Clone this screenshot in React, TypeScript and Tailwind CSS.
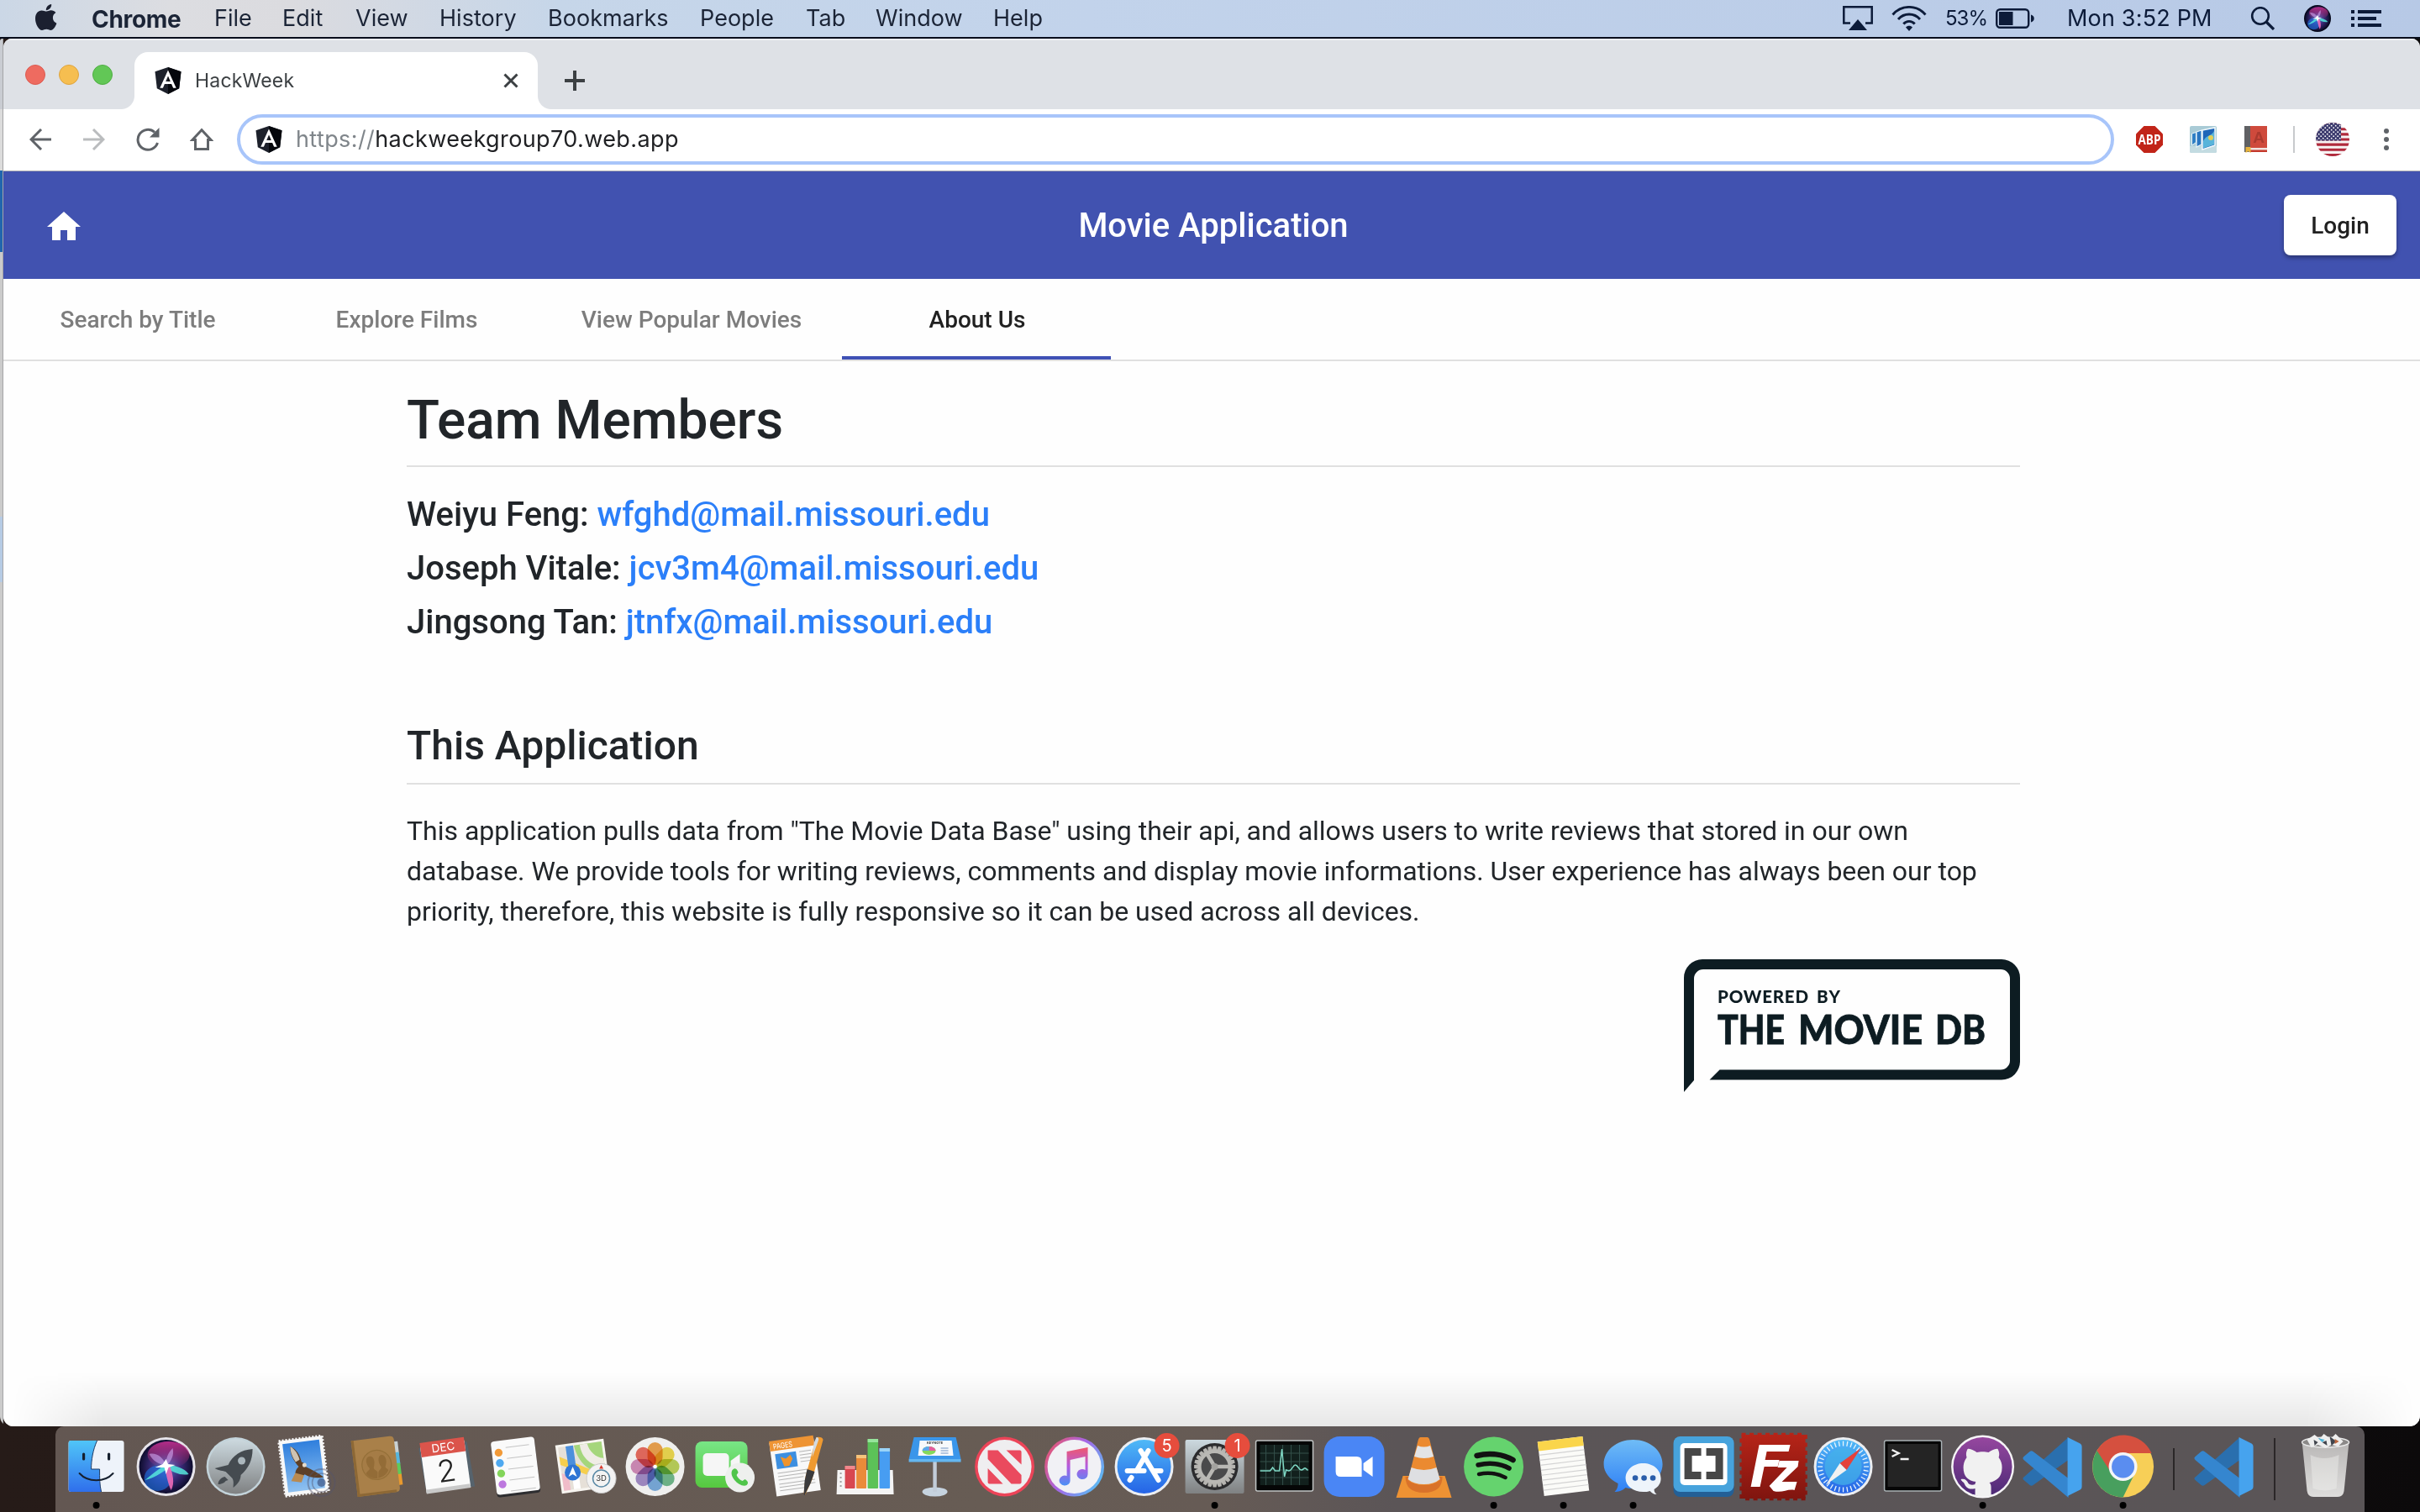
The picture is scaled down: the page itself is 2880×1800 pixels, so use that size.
import type { ReactNode } from "react";

const UI = "font-['Inter','Liberation_Sans',sans-serif]";

/* ---------- menu bar ---------- */

const menus = [
  { label: "File", box: "w-[81px]" },
  { label: "Edit", box: "w-[87px]" },
  { label: "View", box: "w-[100px]" },
  { label: "History", box: "w-[129px]" },
  { label: "Bookmarks", box: "w-[181px]" },
  { label: "People", box: "w-[126px]" },
  { label: "Tab", box: "w-[83px]" },
  { label: "Window", box: "w-[140px]" },
  { label: "Help", box: "w-[80px]" },
];

function MenuBar() {
  return (
    <header
      className={`${UI} flex h-[46px] shrink-0 items-center border-b-2 border-[#070d1c] bg-[linear-gradient(90deg,#cbd7e6_0%,#dcdde1_7%,#dbdbdf_12%,#c6d6e9_23%,#c2d3eb_45%,#b7c9e6_100%)] text-[27px] tracking-[0.03px] text-[#1b2436]`}
    >
      <svg className="ml-[40px] h-[34px] w-[30px]" viewBox="0 0 30 34" fill="#1b2030">
        <path d="M15.3 8.6c-1.6 0-3.400-1.200-5.800-1.200C5.400 7.400 2 10.900 2 17.200 2 23.600 6.200 31 10 31c1.900 0 2.900-1.200 5.300-1.200 2.300 0 3 1.200 5.100 1.200 3.100 0 5.800-4.700 7-8.300-2.700-1.100-4.500-3.500-4.500-6.400 0-2.700 1.300-4.800 3.500-6.200-1.400-1.900-3.500-2.800-5.700-2.800-2.300 0-3.800 1.300-5.400 1.300z" />
        <path d="M14.800 7.200c-.2-3.600 2.700-6.900 6.400-7.200.4 3.700-2.700 7-6.400 7.200z" />
      </svg>
      <span className="ml-[39px] w-[146px] pt-[1px] text-[28px] leading-none font-bold tracking-[-0.3px]">Chrome</span>
      {menus.map((m) => (
        <span key={m.label} className={`${m.box} pt-[1px]`}>
          {m.label}
        </span>
      ))}
      <div className="ml-auto flex items-center text-[#0c1b39]">
        <svg className="h-[30px] w-[36px]" viewBox="0 0 36 30">
          <path d="M9 20.500H1.300V1.300h33.400v19.200H27" fill="none" stroke="currentColor" strokeWidth="2.500" />
          <path d="M18 16l11 13H7z" fill="currentColor" />
        </svg>
        <svg className="ml-[22px] h-[30px] w-[42px]" viewBox="0 0 42 30" fill="none" stroke="currentColor" strokeWidth="2.900">
          <path d="M1.500 10.500C12-1.600 30-1.600 40.500 10.500M8 16c7-8 19-8 26 0M14.300 21.500c3.600-4.200 9.800-4.200 13.400 0" />
          <path d="M21 30l-4-4.500c2-2.200 6-2.200 8 0z" fill="currentColor" stroke="none" />
        </svg>
        <span className="ml-[22px] w-[60px] text-[24px] tracking-[-1px]">53%</span>
        <svg className="h-[24px] w-[46px]" viewBox="0 0 46 24">
          <rect x="1.200" y="1.200" width="38" height="21.600" rx="4" fill="none" stroke="currentColor" strokeWidth="2.400" />
          <rect x="4" y="4" width="16.500" height="16" fill="currentColor" />
          <path d="M42 7.500c5 1 5 8 0 9z" fill="currentColor" />
        </svg>
        <span className="ml-[39px] w-[218px] pt-[1px] tracking-[0.18px]">Mon 3:52 PM</span>
        <svg className="h-[28px] w-[30px]" viewBox="0 0 30 28" fill="none" stroke="currentColor" strokeWidth="2.600">
          <circle cx="12" cy="11" r="9.800" />
          <path d="M19 18l9 9" strokeWidth="3.200" />
        </svg>
        <svg className="ml-[34px] h-[32px] w-[32px]" viewBox="-35 -35 70 70">
          <SiriOrb rim="#06081c" />
        </svg>
        <svg className="mr-[46px] ml-[24px] h-[20px] w-[36px]" viewBox="0 0 36 20" fill="currentColor">
          <path d="M0 0h4v4H0zM8 0h28v4H8zM0 8h4v4H0zM8 8h22v4H8zM0 16h4v4H0zM8 16h28v4H8z" />
        </svg>
      </div>
    </header>
  );
}

/* ---------- browser chrome ---------- */

function AngularShield({ className }: { className: string }) {
  return (
    <svg className={className} viewBox="0 0 32 32">
      <path d="M16 0l15.500 5.300-2.300 19.900L16 32 2.800 25.200.500 5.300z" fill="#1d212b" />
      <path d="M16 0l15.500 5.300-2.300 19.900L16 32z" fill="#05070c" />
      <path fillRule="evenodd" d="M16 3.600L6.300 24.800h3.600l2-4.800h8.200l2 4.800h3.600zM16 10.500l2.800 6.500h-5.600z" fill="#fff" />
    </svg>
  );
}

function TabStrip() {
  return (
    <div className="flex h-[84px] shrink-0 items-end border-t-2 border-[#eceef1] bg-[#dee1e6]">
      <div className="ml-[26px] flex gap-[16px] self-start pt-[29px]">
        <span className="size-[24px] rounded-full border border-[#dd5a50] bg-[#ee6b60]" />
        <span className="size-[24px] rounded-full border border-[#dea43f] bg-[#f6be50]" />
        <span className="size-[24px] rounded-full border border-[#4fae43] bg-[#62c756]" />
      </div>
      <div className="ml-[10px] size-[16px] bg-[radial-gradient(circle_at_0_0,#dee1e6_15.500px,#fff_16.500px)]" />
      <div className={`${UI} flex h-[68px] w-[480px] items-center rounded-t-[16px] bg-white pr-[23px] pl-[24px]`}>
        <AngularShield className="size-[32px]" />
        <span className="ml-[16px] text-[23px] tracking-[0.2px] text-[#3c4043]">HackWeek</span>
        <svg className="ml-auto size-[18px]" viewBox="0 0 18 18" stroke="#3c4043" strokeWidth="3">
          <path d="M1.500 1.500l15 15M16.500 1.500l-15 15" />
        </svg>
      </div>
      <div className="size-[16px] bg-[radial-gradient(circle_at_100%_0,#dee1e6_15.500px,#fff_16.500px)]" />
      <svg className="mb-[22px] ml-[16px] size-[24px]" viewBox="0 0 24 24" stroke="#3c4043" strokeWidth="4">
        <path d="M12 0v24M0 12h24" />
      </svg>
    </div>
  );
}

function Toolbar() {
  return (
    <div className="flex h-[74px] shrink-0 items-center border-b border-[#b0b0b3] bg-white pb-[1px] pl-[31px]">
      <svg className="size-[26px]" viewBox="0 0 26 26" fill="none" stroke="#5f6368" strokeWidth="3">
        <path d="M26 13H2M14 1L2 13l12 12" />
      </svg>
      <svg className="ml-[38px] size-[26px]" viewBox="0 0 26 26" fill="none" stroke="#babcbe" strokeWidth="3">
        <path d="M0 13h24M12 1l12 12-12 12" />
      </svg>
      <svg className="ml-[37px] size-[28px]" viewBox="0 0 28 28" fill="none" stroke="#5f6368" strokeWidth="3">
        <path d="M25.500 18A12 12 0 1 1 22 5.300" />
        <path d="M27.500 0v11.500H16z" fill="#5f6368" stroke="none" />
      </svg>
      <svg className="ml-[36px] size-[28px]" viewBox="0 0 28 28" fill="none" stroke="#5f6368" strokeWidth="3">
        <path d="M14 2.800L3 14.500h3.500v11h15v-11H25z" />
      </svg>
      <div className={`${UI} ml-[28px] flex h-[60px] w-[2234px] items-center rounded-full border-4 border-[#a8c5fa] pl-[18px] text-[27px] text-[#202124]`}>
        <AngularShield className="size-[32px]" />
        <span className="ml-[16px] pt-[1px] tracking-[0.4px]">
          <span className="text-[#80868b]">https://</span>hackweekgroup70.web.app
        </span>
      </div>
      <svg className="ml-[26px] size-[32px]" viewBox="0 0 32 32">
        <path d="M9.500 0h13L32 9.500v13L22.500 32h-13L0 22.500v-13z" fill="#c12418" />
        <text x="16" y="21.500" fontSize="15.500" fontWeight="700" fill="#fff" textAnchor="middle" textLength="27" lengthAdjust="spacingAndGlyphs" fontFamily="Open Sans, sans-serif">
          ABP
        </text>
      </svg>
      <svg className="ml-[32px] size-[32px]" viewBox="0 0 32 32">
        <rect width="32" height="32" rx="2" fill="#a9cbd6" />
        <path d="M0 24h32v6a2 2 0 0 1-2 2H2a2 2 0 0 1-2-2z" fill="#c3dbe1" />
        <path d="M2.500 9l5-1.500v12L2.500 23z" fill="#2f7fc4" stroke="#eaf6fb" strokeWidth="1" />
        <path d="M8 7l6-2v17l-6 3z" fill="#2a76c0" stroke="#eaf6fb" strokeWidth="1.200" />
        <path d="M15 5l15-3v21l-15 5z" fill="#1f66b8" stroke="#f2fafd" strokeWidth="1.500" />
        <path d="M16 18c4-8 9-5 13-12v16l-13 4.500z" fill="#58b4da" />
        <circle cx="25" cy="14" r="3" fill="#e2cf58" />
      </svg>
      <svg className="ml-[33px] h-[32px] w-[28px]" viewBox="0 0 28 32">
        <path d="M0 0h27v26H0z" fill="#cf4a3c" />
        <path d="M0 0h7v31H0z" fill="#606164" />
        <path d="M7 26h20v3H7z" fill="#f0e5e2" />
        <path d="M7 28.500h20V31H7z" fill="#c5392c" />
        <path d="M1.500 25h6v7l-3-2-3 2z" fill="#e8b43c" />
        <text x="17" y="20" fontSize="19" fontWeight="700" fill="#ab3a2f" textAnchor="middle" fontFamily="Liberation Sans, sans-serif">
          A
        </text>
      </svg>
      <span className="ml-[30px] h-[32px] w-[2px] bg-[#c8cacd]" />
      <svg className="ml-[25px] size-[40px]" viewBox="0 0 40 40">
        <defs>
          <clipPath id="flag">
            <circle cx="20" cy="20" r="20" />
          </clipPath>
          <pattern id="stars" width="5" height="5" patternUnits="userSpaceOnUse">
            <circle cx="1.200" cy="1.200" r=".9" fill="#fff" />
            <circle cx="3.700" cy="3.700" r=".9" fill="#fff" />
          </pattern>
        </defs>
        <g clipPath="url(#flag)">
          <path d="M0 0h40v40H0z" fill="#f7f3f3" />
          <path d="M0 0h40v3H0zM0 6.200h40v3.100H0zM0 12.300h40v3.100H0zM0 18.500h40v3H0zM0 24.600h40v3.100H0zM0 30.800h40v3H0zM0 37h40v3H0z" fill="#b02a3c" />
          <path d="M0 0h30v21.500H0z" fill="#3c3b6e" />
          <path d="M0 0h30v21.500H0z" fill="url(#stars)" />
        </g>
      </svg>
      <svg className="ml-[41px] h-[28px] w-[6px]" viewBox="0 0 6 28" fill="#5f6368">
        <circle cx="3" cy="4" r="3" />
        <circle cx="3" cy="14" r="3" />
        <circle cx="3" cy="24" r="3" />
      </svg>
    </div>
  );
}

/* ---------- the web page ---------- */

const members = [
  { name: "Weiyu Feng", mail: "wfghd@mail.missouri.edu" },
  { name: "Joseph Vitale", mail: "jcv3m4@mail.missouri.edu" },
  { name: "Jingsong Tan", mail: "jtnfx@mail.missouri.edu" },
];

function MovieDbLogo() {
  return (
    <svg className="mt-[33px] ml-auto h-[158px] w-[400px]" viewBox="0 0 400 158" fill="#0d1c22" fontFamily="Lato, sans-serif" fontWeight="900">
      <path d="M0 158V22A22 22 0 0 1 22 0H378A22 22 0 0 1 400 22V121A22 22 0 0 1 378 143.500H30.500L42.500 131.500H377A11 11 0 0 0 388 120.500V23A11 11 0 0 0 377 12H23A11 11 0 0 0 12 23V144z" />
      <text x="40" y="52" fontSize="20.500" textLength="108">
        POWERED
      </text>
      <text x="158" y="52" fontSize="20.500" textLength="28">
        BY
      </text>
      <g fontSize="47.500" stroke="#0d1c22" strokeWidth=".8">
        <text x="40" y="101" textLength="80" lengthAdjust="spacingAndGlyphs">
          THE
        </text>
        <text x="136" y="101" textLength="148" lengthAdjust="spacingAndGlyphs">
          MOVIE
        </text>
        <text x="299" y="101" textLength="60" lengthAdjust="spacingAndGlyphs">
          DB
        </text>
      </g>
    </svg>
  );
}

function WebPage() {
  return (
    <div className="flex min-h-0 flex-1 flex-col bg-[#fefefe] font-['Roboto',sans-serif] text-[#212529]">
      <div className="flex h-[128px] shrink-0 items-center justify-between bg-[#4152b0] pr-[28px] pl-[48px] text-white">
        <svg className="mt-[4px] mr-[86px] size-[48px]" viewBox="0 0 24 24" fill="#fff">
          <path d="M10 20v-6h4v6h5v-8h3L12 3 2 12h3v8z" />
        </svg>
        <h1 className="mt-[2px] mr-[16px] text-[40px] font-medium">Movie Application</h1>
        <button className="h-[72px] w-[134px] rounded-[8px] bg-white pt-[1px] text-[28px] font-medium text-[#212121] shadow-[0_3px_5px_rgba(0,0,0,0.35)]">
          Login
        </button>
      </div>
      <nav className="flex h-[98px] shrink-0 border-b-2 border-[#e0e0e0] text-[28px] font-medium text-[#7d7d7d]">
        <span className="flex w-[320px] items-center justify-center pt-[2px]">Search by Title</span>
        <span className="flex w-[320px] items-center justify-center pt-[2px]">Explore Films</span>
        <span className="flex w-[358px] items-center justify-center pt-[2px]">View Popular Movies</span>
        <span className="flex w-[320px] items-center justify-center border-b-4 border-[#3f51b5] pt-[6px] pl-[2px] text-[#212121]">About Us</span>
      </nav>
      <main className="ml-[480px] flex w-[1920px] flex-col">
        <h1 className="mt-[33px] text-[64px] leading-[76px] font-medium">Team Members</h1>
        <hr className="mt-[15px] border-t-2 border-[#e0e0e0]" />
        <ul className="mt-[25px] text-[40px] leading-[64px] font-medium">
          {members.map((m) => (
            <li key={m.mail}>
              {m.name}: <span className="text-[#2b7ff9]">{m.mail}</span>
            </li>
          ))}
        </ul>
        <h2 className="mt-[86px] text-[48px] leading-[58px] font-medium">This Application</h2>
        <hr className="mt-[15px] border-t-2 border-[#e0e0e0]" />
        <p className="mt-[31px] text-[32px] leading-[48px] tracking-[-0.012px] whitespace-nowrap">
          This application pulls data from "The Movie Data Base" using their api, and allows users to write reviews that stored in our own
          <br />
          database. We provide tools for writing reviews, comments and display movie informations. User experience has always been our top
          <br />
          priority, therefore, this website is fully responsive so it can be used across all devices.
        </p>
        <MovieDbLogo />
      </main>
    </div>
  );
}

/* ---------- dock icons: drawn around x = 0, vertical centre 48 ---------- */

function SiriOrb({ rim }: { rim: string }) {
  return (
    <>
      <circle r="35" fill={rim} />
      <circle r="32" fill="url(#orb)" />
      <ellipse cx="3" cy="-14" rx="25" ry="16" fill="url(#orbTop)" />
      <ellipse cx="-10" cy="14" rx="16" ry="15" fill="#1f6fe0" opacity=".65" />
      <path d="M0-3C-10 4-18 10-25 16c10-2 19-8 27-14zM0-3c10 2 22 4 27 12-9 2-19-2-27-8z" fill="#56e6dc" opacity=".85" />
      <path d="M-2-2c2 10 4 22 8 30 5-8 2-20-2-30z" fill="#f06bb8" opacity=".9" />
      <path d="M0-2C-4-12-12-17-20-15c4 8 11 12 20 14zM0-2c0-8 2-14 8-20 2 9-2 15-7 21z" fill="#cfa6ee" opacity=".6" />
      <path d="M0-9l2.500 6L11-2 3 1 0 9l-2-8-11 0 9-4z" fill="#fff" />
    </>
  );
}

function Badge({ n }: { n: string }) {
  return (
    <g>
      <circle cx="27" cy="23" r="15" fill="#e64d3d" />
      <text x="27" y="30.500" fontSize="20" fill="#fff" textAnchor="middle" fontFamily="Inter, sans-serif">
        {n}
      </text>
    </g>
  );
}

function VsCode() {
  return (
    <>
      <path d="M-34 64l7 6q2 1.500 4 0L19 40V13L-33.500 60q-3 2-.5 4z" fill="#2a6fae" />
      <path d="M-34 36l7-6q2-1.500 4 0L19 62v23L-33.500 40.500q-3-2.500-.5-4.500z" fill="#3586cf" />
      <path d="M18 13l15 7.500q2 1 2 3.500v48q0 2.500-2 3.500L18 83z" fill="#46a3ee" />
    </>
  );
}

const petals = ["#f09a37", "#f0d83a", "#b5cf45", "#5fb37f", "#6aa3dc", "#9a80c4", "#cf7fb4", "#ea5a4b"];
const ticks = Array.from({ length: 36 }, (_, i) => i * 10);
const teeth = Array.from({ length: 24 }, (_, i) => i * 15);

const glyphs: { id: string; dot?: boolean; art: ReactNode }[] = [
  {
    id: "finder",
    dot: true,
    art: (
      <>
        <rect x="-33" y="17" width="66" height="61" rx="3" fill="#eef3fa" />
        <path d="M-30 17H1C-4 28-6 40-6 51H4C4 62 4 70 6 78H-30a3 3 0 0 1-3-3V20a3 3 0 0 1 3-3z" fill="url(#finderBlue)" />
        <path d="M-15 33v6M15 33v6" stroke="#16202e" strokeWidth="3.200" strokeLinecap="round" />
        <path d="M1 17C-4 28-6 40-6 51H4C4 62 4 70 6 78" fill="none" stroke="#1d3c66" strokeWidth="1" />
        <path d="M-20 56C-10 67 10 67 20 56" fill="none" stroke="#16202e" strokeWidth="2" strokeLinecap="round" />
      </>
    ),
  },
  {
    id: "siri",
    art: (
      <g transform="translate(0 48)">
        <SiriOrb rim="#e6e4ea" />
      </g>
    ),
  },
  {
    id: "launchpad",
    art: (
      <>
        <circle cy="48" r="35" fill="#c3d3da" />
        <circle cy="48" r="32.500" fill="url(#steel)" />
        <path d="M20 27C6 28-4 35-9 46L-25 50C-20 53-15 53-12 54L-4 62C-2 66-3 69-3 73C4 68 6 62 6 58C15 50 20 41 20 27z" fill="#454b50" />
        <path d="M-13 60c-5 1-8 5-8 9 4 0 8-2 9-4l3-1z" fill="#454b50" />
        <circle cx="7" cy="41" r="4.500" fill="#aab6bc" />
      </>
    ),
  },
  {
    id: "mail",
    art: (
      <>
        <g transform="rotate(-7 0 48)">
          <rect x="-28" y="14" width="52" height="66" fill="#f8f8f8" />
          <rect x="-28" y="14" width="52" height="66" fill="none" stroke="#f8f8f8" strokeWidth="3" strokeDasharray="2 2" />
          <rect x="-24" y="18" width="44" height="58" fill="url(#sky)" />
          <path d="M-15 22c7 4 10 11 11 20 3 1 4 4 4 6 6 4 14 9 20 15-9 1-17-2-22-6l-5 3-6-5c0-3 2-6 5-8-5-7-9-16-7-25z" fill="#5d4027" />
          <path d="M-15 22c5 4 8 10 9 17l-5 2c-3-6-5-12-4-19z" fill="#cfc3b2" />
          <path d="M-13 54l10 4-4 8-12-3z" fill="#b98a50" />
          <circle cx="-1" cy="46" r="2.500" fill="#e6dccb" />
        </g>
        <circle cx="19" cy="67" r="16" fill="none" stroke="#55556b" strokeWidth="2" opacity=".45" />
        <circle cx="19" cy="67" r="11" fill="none" stroke="#55556b" strokeWidth="1.500" opacity=".45" />
        <circle cx="19" cy="67" r="5" fill="#3f5684" opacity=".7" />
      </>
    ),
  },
  {
    id: "contacts",
    art: (
      <g transform="rotate(-7 0 48)">
        <path d="M22 21h7v15h-7z" fill="#c9d1d3" />
        <path d="M22 34h7v14h-7z" fill="#57b6dd" />
        <path d="M22 47h7v14h-7z" fill="#5fca5a" />
        <path d="M22 60h7v13h-7z" fill="#e99a2e" />
        <path d="M-26 14h46q5 0 5 5v57q0 5-5 5h-46z" fill="#a98049" />
        <path d="M-26 14h3v67h-3z" fill="#8d6835" />
        <path d="M-26 78h47v3h-47z" fill="#8d6835" />
        <circle cx="1" cy="46" r="17.500" fill="#a57c46" stroke="#957039" strokeWidth="1.300" />
        <path d="M-13 55c2-4 5-3 5-6-5-7-3-14 2-14s6 7 3 14c0 3 3 3 4 6l-1 7c-6 0-10-2-13-7z" fill="#936c37" />
        <path d="M2 55c1-3 4-3 4-6-4-7-2-14 2-14s7 7 3 14c0 3 3 3 3 5-3 5-7 7-13 8z" fill="#936c37" />
      </g>
    ),
  },
  {
    id: "calendar",
    art: (
      <g transform="rotate(-8 0 48)">
        <path d="M-29 22h58l2 54h-58z" fill="#56636d" />
        <path d="M-27 20h53v56h-53z" fill="#fafafa" />
        <path d="M-27 72h53v5h-53z" fill="#c9c9c9" />
        <path d="M-27 16h53v17h-53z" fill="#db544b" />
        <text x="0" y="29.500" fontSize="13.500" fill="#fff" textAnchor="middle" fontFamily="Inter, sans-serif">
          DEC
        </text>
        <text x="0" y="66" fontSize="36" fontWeight="300" fill="#222" textAnchor="middle" fontFamily="Inter, sans-serif">
          2
        </text>
      </g>
    ),
  },
  {
    id: "reminders",
    art: (
      <g transform="rotate(-7 0 48)">
        <rect x="-26" y="18" width="52" height="64" rx="4" fill="#2d2d30" />
        <rect x="-26" y="15" width="52" height="64" rx="4" fill="#fafafa" />
        <path d="M-9 24h28M-9 37h30M-9 50h30M-9 63h30M-9 76h30" stroke="#c4c4c4" strokeWidth="1" />
        <circle cx="-18" cy="29" r="4.700" fill="#f29a38" />
        <circle cx="-18" cy="41.500" r="4.700" fill="#4fa9f0" />
        <circle cx="-18" cy="54" r="4.700" fill="#83d55a" />
        <circle cx="-18" cy="67" r="4.700" fill="#bd78de" />
      </g>
    ),
  },
  {
    id: "maps",
    art: (
      <>
        <g transform="rotate(-8 0 48)">
          <rect x="-32" y="18" width="58" height="58" fill="#f7f5f0" />
          <path d="M-29 21h52v52h-52z" fill="#e6e0d8" />
          <path d="M-10 21h33v38C8 58-8 45-10 21z" fill="#a5d67c" />
          <path d="M-3 21h9c1 10 8 18 17 20v10C8 49-3 38-3 21z" fill="#efece5" />
          <path d="M-29 32L23 62v8L-29 42z" fill="#f6cf4e" />
          <path d="M-29 52l8 4v17h-8z" fill="#f0bcc9" />
          <path d="M-20 21h9v38h-9z" fill="#4c8fdc" />
          <path d="M-17 58h8v15h-8z" fill="#fff" />
        </g>
        <circle cx="-15" cy="55" r="9.500" fill="#2e74d4" />
        <path d="M-15 48l5 12-5-3-5 3z" fill="#fff" />
        <circle cx="19" cy="62" r="17.500" fill="#f3f3f3" stroke="#c9c9c9" strokeWidth="1" />
        <circle cx="19" cy="62" r="10" fill="none" stroke="#5b8aa6" strokeWidth="1.500" />
        <path d="M19 46l2.500 4.500h-5z" fill="#d8392b" />
        <text x="19" y="65.500" fontSize="9.500" fill="#333" textAnchor="middle" fontFamily="Inter, sans-serif">
          3D
        </text>
      </>
    ),
  },
  {
    id: "photos",
    art: (
      <>
        <circle cy="48" r="35" fill="#efefee" />
        {petals.map((c, i) => (
          <rect key={c} x="-9" y="19" width="18" height="27" rx="9" fill={c} opacity=".88" transform={`rotate(${i * 45} 0 48)`} className="mix-blend-multiply" />
        ))}
        <circle cy="48" r="2" fill="#fff" />
      </>
    ),
  },
  {
    id: "facetime",
    art: (
      <>
        <rect x="-35" y="18" width="62" height="55" rx="8" fill="url(#green)" />
        <rect x="-26" y="32" width="31" height="27" rx="5" fill="#f6f6f6" />
        <path d="M7 41l11-8v26L7 51z" fill="#f6f6f6" />
        <circle cx="18" cy="61" r="17.500" fill="#eef0ee" />
        <path d="M9 52c4-4 6 0 7 3l-2 3c1 3 4 6 7 7l3-2c3 2 5 4 2 7C19 74 4 60 9 52z" fill="#4fc54a" />
      </>
    ),
  },
  {
    id: "pages",
    art: (
      <>
        <g transform="rotate(-8 0 48)">
          <path d="M-27 16h53v64h-53z" fill="#f8f8f8" />
          <path d="M-27 14h53v12h-53z" fill="#ee9434" />
          <text x="-23" y="24" fontSize="9" fill="#fff" textLength="23" lengthAdjust="spacingAndGlyphs" fontFamily="Inter, sans-serif">
            PAGES
          </text>
          <path d="M-22 30h25v18h-25z" fill="#3d8fe0" />
          <path d="M-16 34l6 3 6-4 2 5-5 8h-6z" fill="#f0942c" />
          <path d="M7 31h14M7 35h14M7 39h14M7 43h14M-22 53h43M-22 57h43M-22 61h30M-22 66h43M-22 70h43M-22 74h30" stroke="#b5b5b5" strokeWidth="1" />
        </g>
        <path d="M25 13q7-1 8 3L20 63l-8 18-2-1 2-20z" fill="#ef9a31" />
        <path d="M14 51l9 3-5 14-7 14-1-1 1-16z" fill="#3b3b3d" />
        <path d="M22 20l3-7q4 0 2 5l-7 19z" fill="#d4dbe2" />
      </>
    ),
  },
  {
    id: "numbers",
    art: (
      <>
        <path d="M-33 52h66l1 29h-68z" fill="#f4f4f4" />
        <path d="M-30 56h2M-30 61h2M-30 66h2M-30 71h2" stroke="#888" strokeWidth="1.500" />
        <rect x="-24" y="47" width="12" height="27" rx="1" fill="#d84750" />
        <rect x="-10.500" y="34" width="12" height="40" rx="1" fill="#ea8b3a" />
        <rect x="3" y="15" width="12.500" height="59" rx="1" fill="#5cc258" />
        <rect x="17" y="26" width="12.500" height="48" rx="1" fill="#479df2" />
        <path d="M-24 47h12v4h-12z" fill="#f0888c" />
        <path d="M-10.500 34h12v4h-12z" fill="#f5c47c" />
        <path d="M3 15h12.500v4H3z" fill="#97e59c" />
        <path d="M17 26h12.500v4H17z" fill="#9ad4f8" />
      </>
    ),
  },
  {
    id: "keynote",
    art: (
      <>
        <ellipse cx="0" cy="78" rx="15" ry="5.500" fill="#c6d3df" />
        <path d="M-2.200 40h4.400v38h-4.400z" fill="#c2ccd8" />
        <path d="M-25 13h50l6 26h-62z" fill="#3a96ea" />
        <path d="M-31 39h62v3.500h-62z" fill="#64b6f0" />
        <path d="M-18 17h38l2 18h-42z" fill="#f7f9fb" />
        <text x="0" y="21.500" fontSize="4" fontWeight="700" fill="#444" textAnchor="middle" fontFamily="Inter, sans-serif">
          KEYNOTE
        </text>
        <ellipse cx="-7" cy="29" rx="8" ry="5" fill="#86d85b" />
        <path d="M-7 29v-5a8 5 0 0 1 8 5z" fill="#e35c9c" />
        <path d="M-7 29v-5a8 5 0 0 0-8 5z" fill="#5da7ee" />
        <path d="M7 26h9M7 29h9M7 32h9" stroke="#9fb7d8" strokeWidth="1.500" />
      </>
    ),
  },
  {
    id: "news",
    art: (
      <>
        <circle cy="48" r="35.500" fill="#ec4458" />
        <circle cy="48" r="32" fill="#efeef0" />
        <path d="M-20 28.500h12L20 58v8.500a2 2 0 0 1-2 2H8L-20 39z" fill="#ea4a5e" />
        <path d="M2 28.500h16a2 2 0 0 1 2 2v15zM-20 50l18 18.500h-16a2 2 0 0 1-2-2z" fill="#ea4a5e" />
      </>
    ),
  },
  {
    id: "music",
    art: (
      <>
        <circle cy="48" r="35.500" fill="url(#ring)" />
        <circle cy="48" r="32" fill="#f1f1f5" />
        <path d="M-9 30L16 25v32a6.500 6 0 1 1-3-5V36l-18 4v24a6.500 6 0 1 1-4-5z" fill="url(#note)" />
      </>
    ),
  },
  {
    id: "appstore",
    art: (
      <>
        <circle cy="48" r="35" fill="#eceef1" />
        <circle cy="48" r="32" fill="url(#azure)" />
        <path d="M-4 29L11 54M11 54l6 10M5 29L-9 53M-15 61l-2 3M-20 53H0M12 53h8" stroke="#fff" strokeWidth="6" strokeLinecap="round" fill="none" />
        <Badge n="5" />
      </>
    ),
  },
  {
    id: "prefs",
    dot: true,
    art: (
      <>
        <rect x="-35" y="16" width="70" height="64" rx="2" fill="url(#steel)" />
        <circle cy="48" r="28" fill="#2b2b2d" />
        {teeth.map((a) => (
          <path key={a} d="M-2 23.500h4l1 6h-6z" fill="#b5b4b0" transform={`rotate(${a} 0 48)`} />
        ))}
        <circle cy="48" r="18" fill="#4a4a4b" stroke="#b9b8b4" strokeWidth="4" />
        <path d="M0 48h17M0 48l-9-15M0 48l-9 15" stroke="#b9b8b4" strokeWidth="4.500" />
        <circle cy="48" r="4" fill="#a3a29f" />
        <Badge n="1" />
      </>
    ),
  },
  {
    id: "activity",
    art: (
      <>
        <rect x="-34" y="17" width="68" height="60" rx="2" fill="#050606" stroke="#c0c4c4" strokeWidth="1.500" />
        <rect x="-29" y="22" width="58" height="48" fill="#12201d" />
        <path d="M-22 22v48M-12 22v48M-2 22v48M8 22v48M18 22v48M-29 32h58M-29 42h58M-29 52h58M-29 61h58" stroke="#34504a" strokeWidth="1" />
        <path d="M-29 53h12l3-4 3 4h5l3-26 3 33 2-8 3 1c4 0 5-7 8-7s4 6 7 6 3-3 5-2 2 2 3 2" fill="none" stroke="#7fd8c4" strokeWidth="1.500" />
      </>
    ),
  },
  {
    id: "zoom",
    art: (
      <>
        <rect x="-36" y="12" width="72" height="72" rx="19" fill="#4a86f5" />
        <path d="M-22 36H3q6 0 6 6v18H-16q-6 0-6-6z" fill="#fff" />
        <path d="M11 44l11-8v24l-11-8z" fill="#fff" />
      </>
    ),
  },
  {
    id: "vlc",
    art: (
      <>
        <path d="M-25 59h50l8 26h-66z" fill="#ee9233" />
        <path d="M-22 60h44q0 19-22 19t-22-19z" fill="#d9722a" />
        <path d="M-4 13h8q2 0 3 4l12 47q-7 6-19 6t-19-6L-7 17q1-4 3-4z" fill="#eb8a30" />
        <path d="M-7.500 23q7.500 3 15 0l4 13q-11 4-23 0z" fill="#e3e4e6" />
        <path d="M-15 49q15 6 30 0l4 14q-7 6-19 6t-19-6z" fill="#dedfe2" />
      </>
    ),
  },
  {
    id: "spotify",
    dot: true,
    art: (
      <>
        <circle cy="48" r="35.500" fill="#65d36e" />
        <path d="M-20 35c15-4 31-2 43 5" stroke="#121212" strokeWidth="6.500" fill="none" strokeLinecap="round" />
        <path d="M-18.500 46c13-3 26-2 37 4" stroke="#121212" strokeWidth="5.500" fill="none" strokeLinecap="round" />
        <path d="M-17.500 57c12-3 22-1 31.500 4" stroke="#121212" strokeWidth="4.500" fill="none" strokeLinecap="round" />
      </>
    ),
  },
  {
    id: "notes",
    dot: true,
    art: (
      <g transform="rotate(-7 0 48)">
        <path d="M-27 15h54v65h-54z" fill="#fbfbf8" />
        <path d="M-27 15h54v11h-54z" fill="#fad54b" />
        <path d="M-27 31h54M-27 37h54M-27 43h54M-27 49h54M-27 55h54M-27 61h54M-27 67h54M-27 73h54" stroke="#d3d3d3" strokeWidth="1.200" />
      </g>
    ),
  },
  {
    id: "messages",
    dot: true,
    art: (
      <>
        <path d="M0 16c20 0 35 13 35 29S20 74 0 74c-4 0-6 0-9-1-4 4-9 5-13 5 3-3 4-6 4-10-10-5-17-13-17-23 0-16 15-29 35-29z" fill="url(#bubble)" />
        <path d="M12 44c12 0 21 8 21 18 0 6-3 10-8 13 0 3 1 4 3 6-4 0-6-2-8-4-2 1-5 1-8 1-12 0-21-7-21-16 0-10 9-18 21-18z" fill="#eef4fb" />
        <circle cx="2.500" cy="61.500" r="3.300" fill="#2a5daa" />
        <circle cx="13" cy="61.500" r="3.300" fill="#2a5daa" />
        <circle cx="23.500" cy="61.500" r="3.300" fill="#2a5daa" />
      </>
    ),
  },
  {
    id: "brackets",
    art: (
      <>
        <rect x="-36" y="14" width="72" height="70" rx="8" fill="#235f96" />
        <rect x="-36" y="12" width="72" height="66" rx="8" fill="#47a3dc" />
        <rect x="-28" y="20" width="56" height="50" rx="5" fill="#fff" />
        <path d="M-23 26h20v9h-11v19h11v9h-20zM23 26H3v9h11v19H3v9h20z" fill="#474747" />
      </>
    ),
  },
  {
    id: "filezilla",
    art: (
      <>
        <rect x="-38" y="10" width="76" height="76" fill="url(#stamp)" />
        <rect x="-38" y="10" width="76" height="76" fill="none" stroke="url(#stamp)" strokeWidth="4.500" strokeDasharray="5 4.500" />
        <path d="M-17 22H20l-2 8H-8l-2 10H7l-2 8h-16l-5 24h-11z" fill="#fff" />
        <path d="M7 41h23l-1 7L10 66h18l-3 10c-8-2-15 4-25 1l-5-6 21-22H5z" fill="#fff" />
      </>
    ),
  },
  {
    id: "safari",
    art: (
      <>
        <circle cy="48" r="35" fill="#eceef1" />
        <circle cy="48" r="32" fill="url(#azure)" />
        <circle cy="48" r="22" fill="#45b2e8" opacity=".7" />
        {ticks.map((a) => (
          <path key={a} d="M0 17.500v6" stroke="#e9f4fc" strokeWidth="1.300" transform={`rotate(${a} 0 48)`} />
        ))}
        <path d="M21 26L4 52l-8-8z" fill="#e5423b" />
        <path d="M-21 70l17-26 8 8z" fill="#f1f1f1" />
      </>
    ),
  },
  {
    id: "terminal",
    art: (
      <>
        <rect x="-34" y="17" width="68" height="60" rx="2" fill="#060606" stroke="#a9b1b4" strokeWidth="1.500" />
        <rect x="-30" y="21" width="60" height="51" fill="#242424" />
        <path d="M-25 28l8 4-8 4M-15 39h10" fill="none" stroke="#f4f4f4" strokeWidth="2.400" />
      </>
    ),
  },
  {
    id: "github",
    dot: true,
    art: (
      <>
        <circle cy="48" r="37.500" fill="#f5f4f6" />
        <circle cy="48" r="35" fill="url(#violet)" />
        <path d="M-18 27c3-1 8 2 11 4 4-1 10-1 14 0 3-2 8-5 11-4 2 4 2 7 1 10 3 4 4 8 4 12 0 12-7 16-15 18 2 2 2 4 2 7v8c-6 2-13 2-19 0v-8c-9 2-11-2-13-6-1-2-3-2-4-5 5-1 7 1 9 5 2 2 5 2 8 1 0-1 0-2 1-3-9-1-15-6-15-17 0-4 1-8 4-12-1-3-1-6 1-10z" fill="#f1f1f1" />
      </>
    ),
  },
  { id: "vscode", art: <VsCode /> },
  {
    id: "chrome",
    dot: true,
    art: (
      <>
        <circle cy="48" r="36.500" fill="#f7cf57" />
        <path d="M0 48L-31 29A36.500 36.500 0 0 0 0 84.500L14 56z" fill="#489f5e" />
        <path d="M-31 29A36.500 36.500 0 0 1 34 32H0l-15 22z" fill="#d5503f" />
        <circle cy="48" r="17" fill="#f4f5f7" />
        <circle cy="48" r="13.500" fill="#5a8df0" />
      </>
    ),
  },
];

function DockIcon({ art, dot }: { art: ReactNode; dot?: boolean }) {
  return (
    <svg className="h-[102px] w-[83.170px] shrink-0 overflow-visible" viewBox="-41.585 0 83.170 102">
      {art}
      {dot && <circle cy="94" r="4" fill="#000" />}
    </svg>
  );
}

function Gradients() {
  const v = { x1: "0", y1: "0", x2: "0", y2: "1" };
  return (
    <svg className="absolute size-0">
      <defs>
        <radialGradient id="orb" cx=".5" cy=".5" r=".5">
          <stop offset="0" stopColor="#5a7fd0" />
          <stop offset=".55" stopColor="#3a2a78" />
          <stop offset="1" stopColor="#0d0c2c" />
        </radialGradient>
        <linearGradient id="orbTop" {...v}>
          <stop offset="0" stopColor="#b32c8a" />
          <stop offset="1" stopColor="#c8387f" stopOpacity="0" />
        </linearGradient>
        <linearGradient id="finderBlue" {...v}>
          <stop offset="0" stopColor="#50c5f8" />
          <stop offset="1" stopColor="#2f6fec" />
        </linearGradient>
        <linearGradient id="steel" {...v}>
          <stop offset="0" stopColor="#ccd9df" />
          <stop offset="1" stopColor="#7f8182" />
        </linearGradient>
        <linearGradient id="sky" {...v}>
          <stop offset="0" stopColor="#2f7fdd" />
          <stop offset="1" stopColor="#8fc1f0" />
        </linearGradient>
        <linearGradient id="green" {...v}>
          <stop offset="0" stopColor="#78e686" />
          <stop offset="1" stopColor="#56c83f" />
        </linearGradient>
        <linearGradient id="azure" {...v}>
          <stop offset="0" stopColor="#4fb9f7" />
          <stop offset="1" stopColor="#2563e6" />
        </linearGradient>
        <linearGradient id="bubble" {...v}>
          <stop offset="0" stopColor="#6fbcf6" />
          <stop offset="1" stopColor="#2f80f5" />
        </linearGradient>
        <linearGradient id="violet" {...v}>
          <stop offset="0" stopColor="#96479f" />
          <stop offset="1" stopColor="#4c2a76" />
        </linearGradient>
        <linearGradient id="stamp" {...v}>
          <stop offset="0" stopColor="#b52418" />
          <stop offset="1" stopColor="#80150f" />
        </linearGradient>
        <linearGradient id="ring" x1="0" y1=".2" x2="1" y2=".8">
          <stop offset="0" stopColor="#e9556d" />
          <stop offset=".45" stopColor="#a665e6" />
          <stop offset="1" stopColor="#52c4f5" />
        </linearGradient>
        <linearGradient id="note" {...v}>
          <stop offset="0" stopColor="#f0586c" />
          <stop offset=".5" stopColor="#b35be0" />
          <stop offset="1" stopColor="#4a90f5" />
        </linearGradient>
        <linearGradient id="glass" {...v}>
          <stop offset="0" stopColor="#b9b7b6" />
          <stop offset="1" stopColor="#dedddc" />
        </linearGradient>
      </defs>
    </svg>
  );
}

function Dock() {
  return (
    <div className="mr-[66px] ml-[66px] flex h-[102px] shrink-0 items-center rounded-t-[10px] bg-[linear-gradient(90deg,#635752_0%,#675c54_40%,#665b55_50%,#5b5557_58%,#5a5557_100%)] pl-[7px]">
      {glyphs.map((g) => (
        <DockIcon key={g.id} art={g.art} dot={g.dot} />
      ))}
      <span className="mr-[17px] ml-[18px] h-[50px] w-[2px] bg-[#2b2728]" />
      <DockIcon art={<VsCode />} />
      <span className="mx-[18px] h-[74px] w-[2px] bg-[#2b2728]" />
      <DockIcon
        art={
          <>
            <path d="M-28 18h56l-6 59q-1 7-8 7h-28q-7 0-8-7z" fill="url(#glass)" />
            <ellipse cx="0" cy="19" rx="28" ry="6" fill="#8b8988" stroke="#e8e8e8" strokeWidth="1.500" />
            <path d="M-22 16l9-6 6 5 5-6 8 6 6-6 9 9-6 6-8-2-7 4-9-4-8 3z" fill="#eeeeee" />
            <path d="M-14 16l5 3-4 4zM5 12l8 6-6 5zM-4 19l5-2 1 6z" fill="#41454d" />
            <path d="M-9 14l8 2-3 3z" fill="#4db4d8" />
            <path d="M11 15l5 3-5 3z" fill="#b8643d" />
            <path d="M-18 34q16 8 34 0l-3 40q-14 5-28 0z" fill="#efefee" opacity=".45" />
          </>
        }
      />
    </div>
  );
}

/* ---------- desktop ---------- */

export default function App() {
  return (
    <div className="flex h-[1800px] w-[2880px] flex-col overflow-hidden bg-[linear-gradient(90deg,#261b18_0%,#1e1716_50%,#0c0a0b_100%)]">
      <Gradients />
      <MenuBar />
      <div className="flex h-[1652px] shrink-0 overflow-hidden rounded-b-[12px]">
        <div className="flex w-[4px] shrink-0 flex-col border-r border-[#a5a5a7]">
          <span className="h-[84px] rounded-tl-[4px] bg-[#c9ccd2]" />
          <span className="h-[73px] bg-[#dcdcdc]" />
          <span className="h-[97px] bg-[#2166ae]" />
          <span className="h-[315px] bg-[#cbcbcb]" />
          <span className="h-[78px] bg-[#b6cbe4]" />
          <span className="flex-1 bg-[#cbcbcb]" />
        </div>
        <div className="relative flex min-w-0 flex-1 flex-col overflow-hidden rounded-t-[10px] rounded-b-[12px] bg-white">
          <TabStrip />
          <Toolbar />
          <WebPage />
          <div className="pointer-events-none absolute inset-x-0 bottom-0 h-[64px] bg-gradient-to-b from-transparent to-black/9 [mask-image:linear-gradient(90deg,transparent_0,transparent_10px,#000_120px,#000_2740px,transparent_2870px)]" />
        </div>
      </div>
      <Dock />
    </div>
  );
}
